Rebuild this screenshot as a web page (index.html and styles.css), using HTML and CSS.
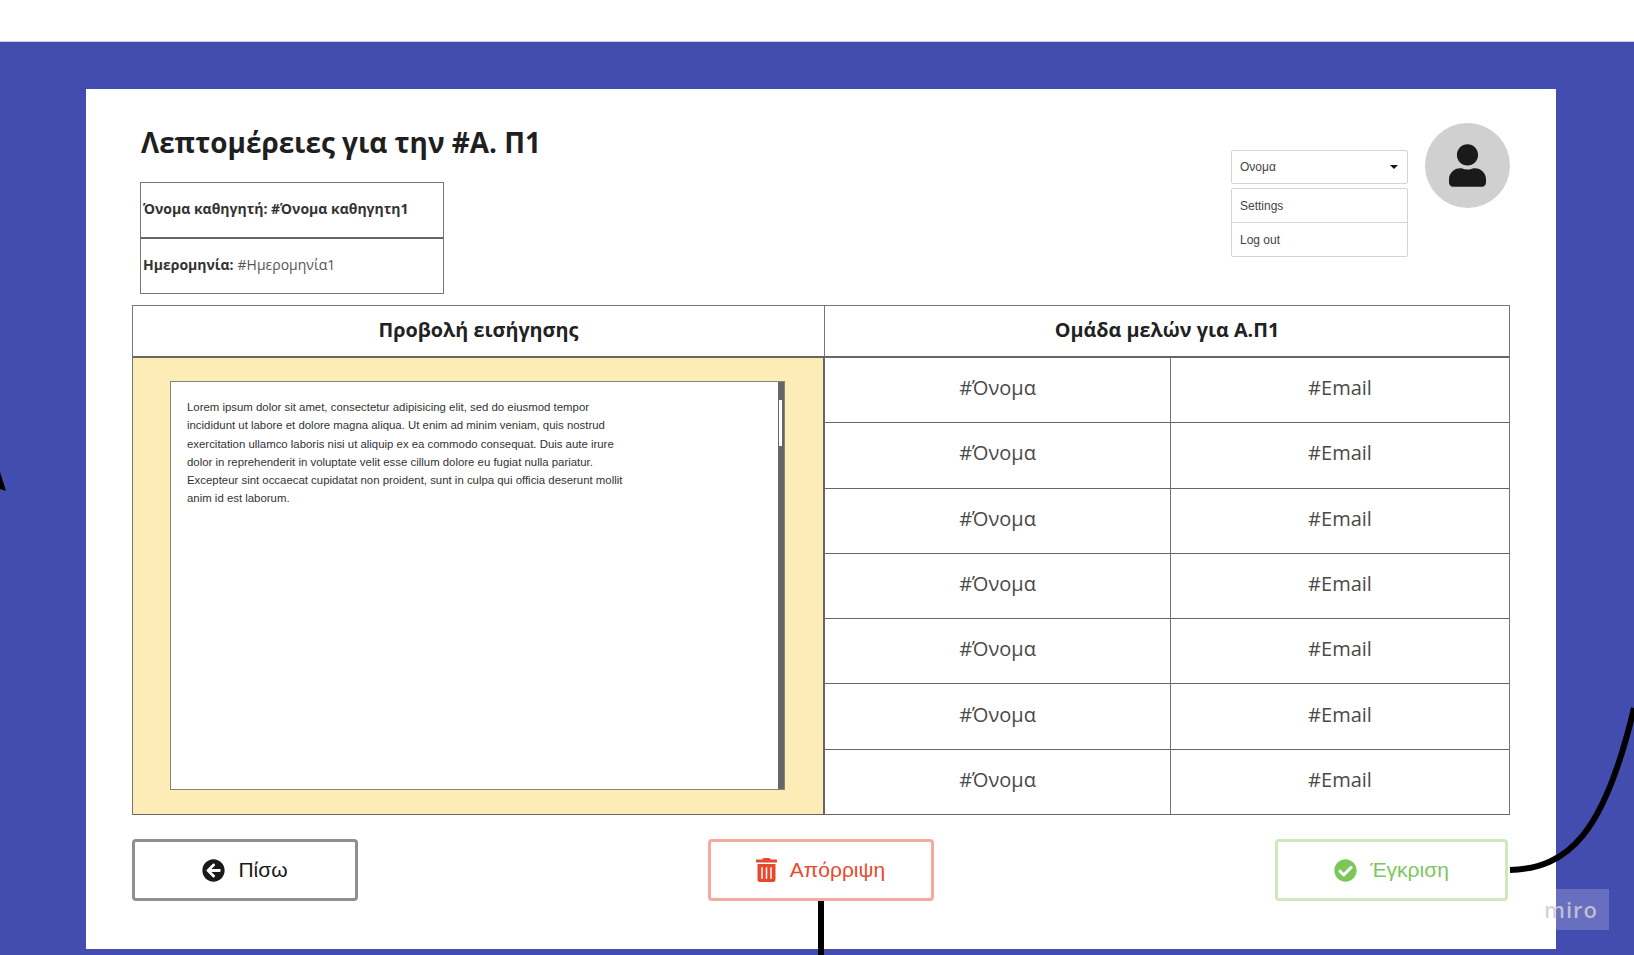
FILE: index.html
```html
<!DOCTYPE html>
<html lang="el">

<head>
    <meta charset="UTF-8">
    <title>Λεπτομέρειες για την #Α. Π1</title>
    <link rel="stylesheet" href="styles.css">
</head>

<body>
    <div class="top_band"></div>
    <div class="board">
        <div class="card">
            <div class="head">
                <div class="head_left">
                    <h1>Λεπτομέρειες για την #Α. Π1</h1>
                    <div class="info">
                        <div class="info_row bold">Όνομα καθηγητή: #Όνομα καθηγητη1</div>
                        <div class="info_row"><b>Ημερομηνία:</b> #Ημερομηνία1</div>
                    </div>
                </div>
                <div class="user">
                    <div class="user_menu">
                        <div class="select">
                            <span>Ονομα</span>
                            <span class="caret"></span>
                        </div>
                        <div class="options">
                            <div class="option">Settings</div>
                            <div class="option">Log out</div>
                        </div>
                    </div>
                    <div class="avatar">
                        <svg viewBox="0 0 448 512" width="37" height="43"><path d="M224 256c70.7 0 128-57.3 128-128S294.7 0 224 0 96 57.3 96 128s57.3 128 128 128zm89.6 32h-16.7c-22.2 10.2-46.9 16-72.9 16s-50.6-5.8-72.9-16h-16.7C60.2 288 0 348.2 0 422.4V464c0 26.5 21.5 48 48 48h352c26.5 0 48-21.5 48-48v-41.6c0-74.2-60.2-134.4-134.4-134.4z"/></svg>
                    </div>
                </div>
            </div>

            <div class="main_table">
                <div class="cell title">Προβολή εισήγησης</div>
                <div class="cell title span2">Ομάδα μελών για Α.Π1</div>
                <div class="viewer">
                    <div class="doc">
                        <p>Lorem ipsum dolor sit amet, consectetur adipisicing elit, sed do eiusmod tempor incididunt ut labore et dolore magna aliqua. Ut enim ad minim veniam, quis nostrud exercitation ullamco laboris nisi ut aliquip ex ea commodo consequat. Duis aute irure dolor in reprehenderit in voluptate velit esse cillum dolore eu fugiat nulla pariatur. Excepteur sint occaecat cupidatat non proident, sunt in culpa qui officia deserunt mollit anim id est laborum.</p>
                        <div class="scrollbar"><div class="thumb"></div></div>
                    </div>
                </div>
                <div class="cell">#Όνομα</div><div class="cell">#Email</div>
                <div class="cell">#Όνομα</div><div class="cell">#Email</div>
                <div class="cell">#Όνομα</div><div class="cell">#Email</div>
                <div class="cell">#Όνομα</div><div class="cell">#Email</div>
                <div class="cell">#Όνομα</div><div class="cell">#Email</div>
                <div class="cell">#Όνομα</div><div class="cell">#Email</div>
                <div class="cell">#Όνομα</div><div class="cell">#Email</div>
            </div>

            <div class="actions">
                <button class="btn back">
                    <svg viewBox="0 0 512 512" width="23" height="23"><path d="M256 504C119 504 8 393 8 256S119 8 256 8s248 111 248 248-111 248-248 248zm28.9-143.6L209.4 288H392c13.3 0 24-10.7 24-24v-16c0-13.3-10.7-24-24-24H209.4l75.5-72.4c9.7-9.3 9.9-24.8.4-34.3l-11-10.9c-9.4-9.4-24.6-9.4-33.9 0L107.7 239c-9.4 9.4-9.4 24.6 0 33.9l132.7 132.7c9.4 9.4 24.6 9.4 33.9 0l11-10.9c9.5-9.5 9.3-25-.4-34.3z"/></svg>
                    Πίσω
                </button>
                <button class="btn reject">
                    <svg viewBox="0 0 448 512" width="21" height="24"><path d="M32 464a48 48 0 0 0 48 48h288a48 48 0 0 0 48-48V128H32zm272-256a16 16 0 0 1 32 0v224a16 16 0 0 1-32 0zm-96 0a16 16 0 0 1 32 0v224a16 16 0 0 1-32 0zm-96 0a16 16 0 0 1 32 0v224a16 16 0 0 1-32 0zM432 32H312l-9.4-18.7A24 24 0 0 0 281.1 0H166.8a23.72 23.72 0 0 0-21.4 13.3L136 32H16A16 16 0 0 0 0 48v32a16 16 0 0 0 16 16h416a16 16 0 0 0 16-16V48a16 16 0 0 0-16-16z"/></svg>
                    Απόρριψη
                </button>
                <button class="btn approve">
                    <svg viewBox="0 0 512 512" width="23" height="23"><path d="M504 256c0 136.967-111.033 248-248 248S8 392.967 8 256 119.033 8 256 8s248 111.033 248 248zM227.314 387.314l184-184c6.248-6.248 6.248-16.379 0-22.627l-22.627-22.627c-6.248-6.249-16.379-6.249-22.628 0L216 308.118l-70.059-70.059c-6.248-6.248-16.379-6.248-22.628 0l-22.627 22.627c-6.248 6.248-6.248 16.379 0 22.627l104 104c6.249 6.249 16.379 6.249 22.628.001z"/></svg>
                    Έγκριση
                </button>
            </div>
        </div>
    </div>

    <!-- connectors on the canvas -->
    <svg class="connectors" viewBox="0 0 1634 955" width="1634" height="955">
        <path class="line" d="M821 901V955"/>
        <path class="line" d="M1510 870C1568 868 1604 835 1634 708"/>
        <path d="M0 472L6 491L0 489Z"/>
    </svg>
    <div class="miro">miro</div>
</body>

</html>
```

FILE: styles.css
```css
* {
    box-sizing: border-box;
}

body {
    margin: 0;
    height: 955px;
    overflow: hidden;
    position: relative;
    background-color: #434caf;
    font-family: "Open Sans", "Liberation Sans", sans-serif;
    color: #333;
}

.top_band {
    height: 42px;
    background-color: #fff;
    border-bottom: 1px solid #c9cce6;
}

.board {
    padding: 47px 78px 0 86px;
}

.card {
    height: 860px;
    padding: 0 46px;
    background-color: #fff;
}

.head {
    height: 216px;
    display: flex;
    justify-content: space-between;
}

.head_left {
    padding: 34px 0 0 8px;
}

h1 {
    margin: 0 0 21px;
    padding-left: 1px;
    font-size: 27.9px;
    line-height: 38px;
    font-weight: 700;
    color: #1f1f1f;
}

.info {
    width: 304px;
    height: 112px;
    border: 1px solid #777;
}

.info_row {
    height: 55px;
    padding: 0 2px 4px;
    display: flex;
    align-items: center;
    gap: 4px;
    font-size: 14px;
    color: #555;
}

.info_row:first-child {
    height: 56px;
    border-bottom: 2px solid #666;
}

.info_row b,
.bold {
    font-weight: 700;
    color: #333;
}

.user {
    padding-top: 34px;
    display: flex;
    align-items: flex-start;
    gap: 17px;
}

.user_menu {
    width: 177px;
    padding-top: 27px;
    font-family: "Liberation Sans", sans-serif;
    font-size: 12px;
    color: #444;
}

.select {
    height: 34px;
    margin-bottom: 4px;
    padding: 0 8px;
    display: flex;
    align-items: center;
    justify-content: space-between;
    border: 1px solid #d4d4d4;
    border-radius: 2px;
}

.caret {
    width: 0;
    height: 0;
    margin-right: 1px;
    border-left: 4px solid transparent;
    border-right: 4px solid transparent;
    border-top: 4px solid #101030;
}

.options {
    border: 1px solid #d4d4d4;
    border-radius: 2px;
}

.option {
    height: 33px;
    padding: 0 8px;
    display: flex;
    align-items: center;
}

.option:first-child {
    height: 34px;
    border-bottom: 1px solid #d4d4d4;
}

.avatar {
    width: 85px;
    height: 85px;
    display: flex;
    align-items: center;
    justify-content: center;
    border-radius: 50%;
    background-color: #d0d0d0;
}

.avatar svg {
    fill: #1a1a1a;
}

.main_table {
    height: 510px;
    width: 1378px;
    display: grid;
    grid-template-columns: 692px 346px 339px;
    grid-template-rows: 52px repeat(7, 1fr);
    border-top: 1px solid #777;
    border-left: 1px solid #777;
}

.cell {
    display: flex;
    align-items: center;
    justify-content: center;
    padding-bottom: 5px;
    border-right: 1px solid #777;
    border-bottom: 1px solid #666;
    font-size: 20px;
    color: #4a4a4a;
}

.title {
    padding-bottom: 4px;
    border-bottom-width: 2px;
    font-size: 19.8px;
    font-weight: 700;
    color: #222;
}

.span2 {
    grid-column: span 2;
}

.viewer {
    grid-row: span 7;
    padding: 23px 38px 24px 37px;
    border-right: 2px solid #666;
    border-bottom: 1px solid #666;
    background-color: #fdecb6;
}

.doc {
    height: 100%;
    position: relative;
    padding: 16px 157px 0 16px;
    background-color: #fff;
    border: 1px solid #85857a;
    font-family: "Liberation Sans", sans-serif;
    font-size: 11.4px;
    line-height: 18.3px;
    color: #333;
}

.doc p {
    margin: 0;
}

.scrollbar {
    position: absolute;
    top: 0;
    right: 0;
    bottom: 0;
    width: 6px;
    padding: 18px 0 0 1px;
    background-color: #666;
}

.thumb {
    width: 3px;
    height: 46px;
    background-color: #fff;
}

.actions {
    width: 1376px;
    margin-top: 24px;
    display: flex;
    justify-content: space-between;
}

.btn {
    width: 226px;
    height: 62px;
    display: flex;
    align-items: center;
    justify-content: center;
    gap: 13px;
    background-color: #fff;
    border: 3px solid;
    border-radius: 4px;
    font-family: "Liberation Sans", sans-serif;
    font-size: 21px;
}

.back {
    border-color: #8f8f8f;
    color: #1a1a1a;
    fill: #1a1a1a;
}

.reject {
    margin-left: 8px;
    border-color: #f5aa9c;
    color: #e8492c;
    fill: #e8492c;
}

.approve {
    width: 233px;
    border-color: #cfeab8;
    color: #7dc75a;
    fill: #7dc75a;
}

.connectors {
    position: absolute;
    left: 0;
    top: 0;
    pointer-events: none;
}

.line {
    fill: none;
    stroke: #000;
    stroke-width: 6px;
}

.miro {
    position: absolute;
    left: 1544px;
    top: 889px;
    width: 65px;
    height: 41px;
    padding: 0 11px 2px 0;
    display: flex;
    align-items: center;
    justify-content: center;
    background-color: rgba(255, 255, 255, 0.2);
    color: rgba(205, 205, 215, 0.85);
    font-size: 22px;
    font-weight: 600;
    letter-spacing: 1px;
}
```
